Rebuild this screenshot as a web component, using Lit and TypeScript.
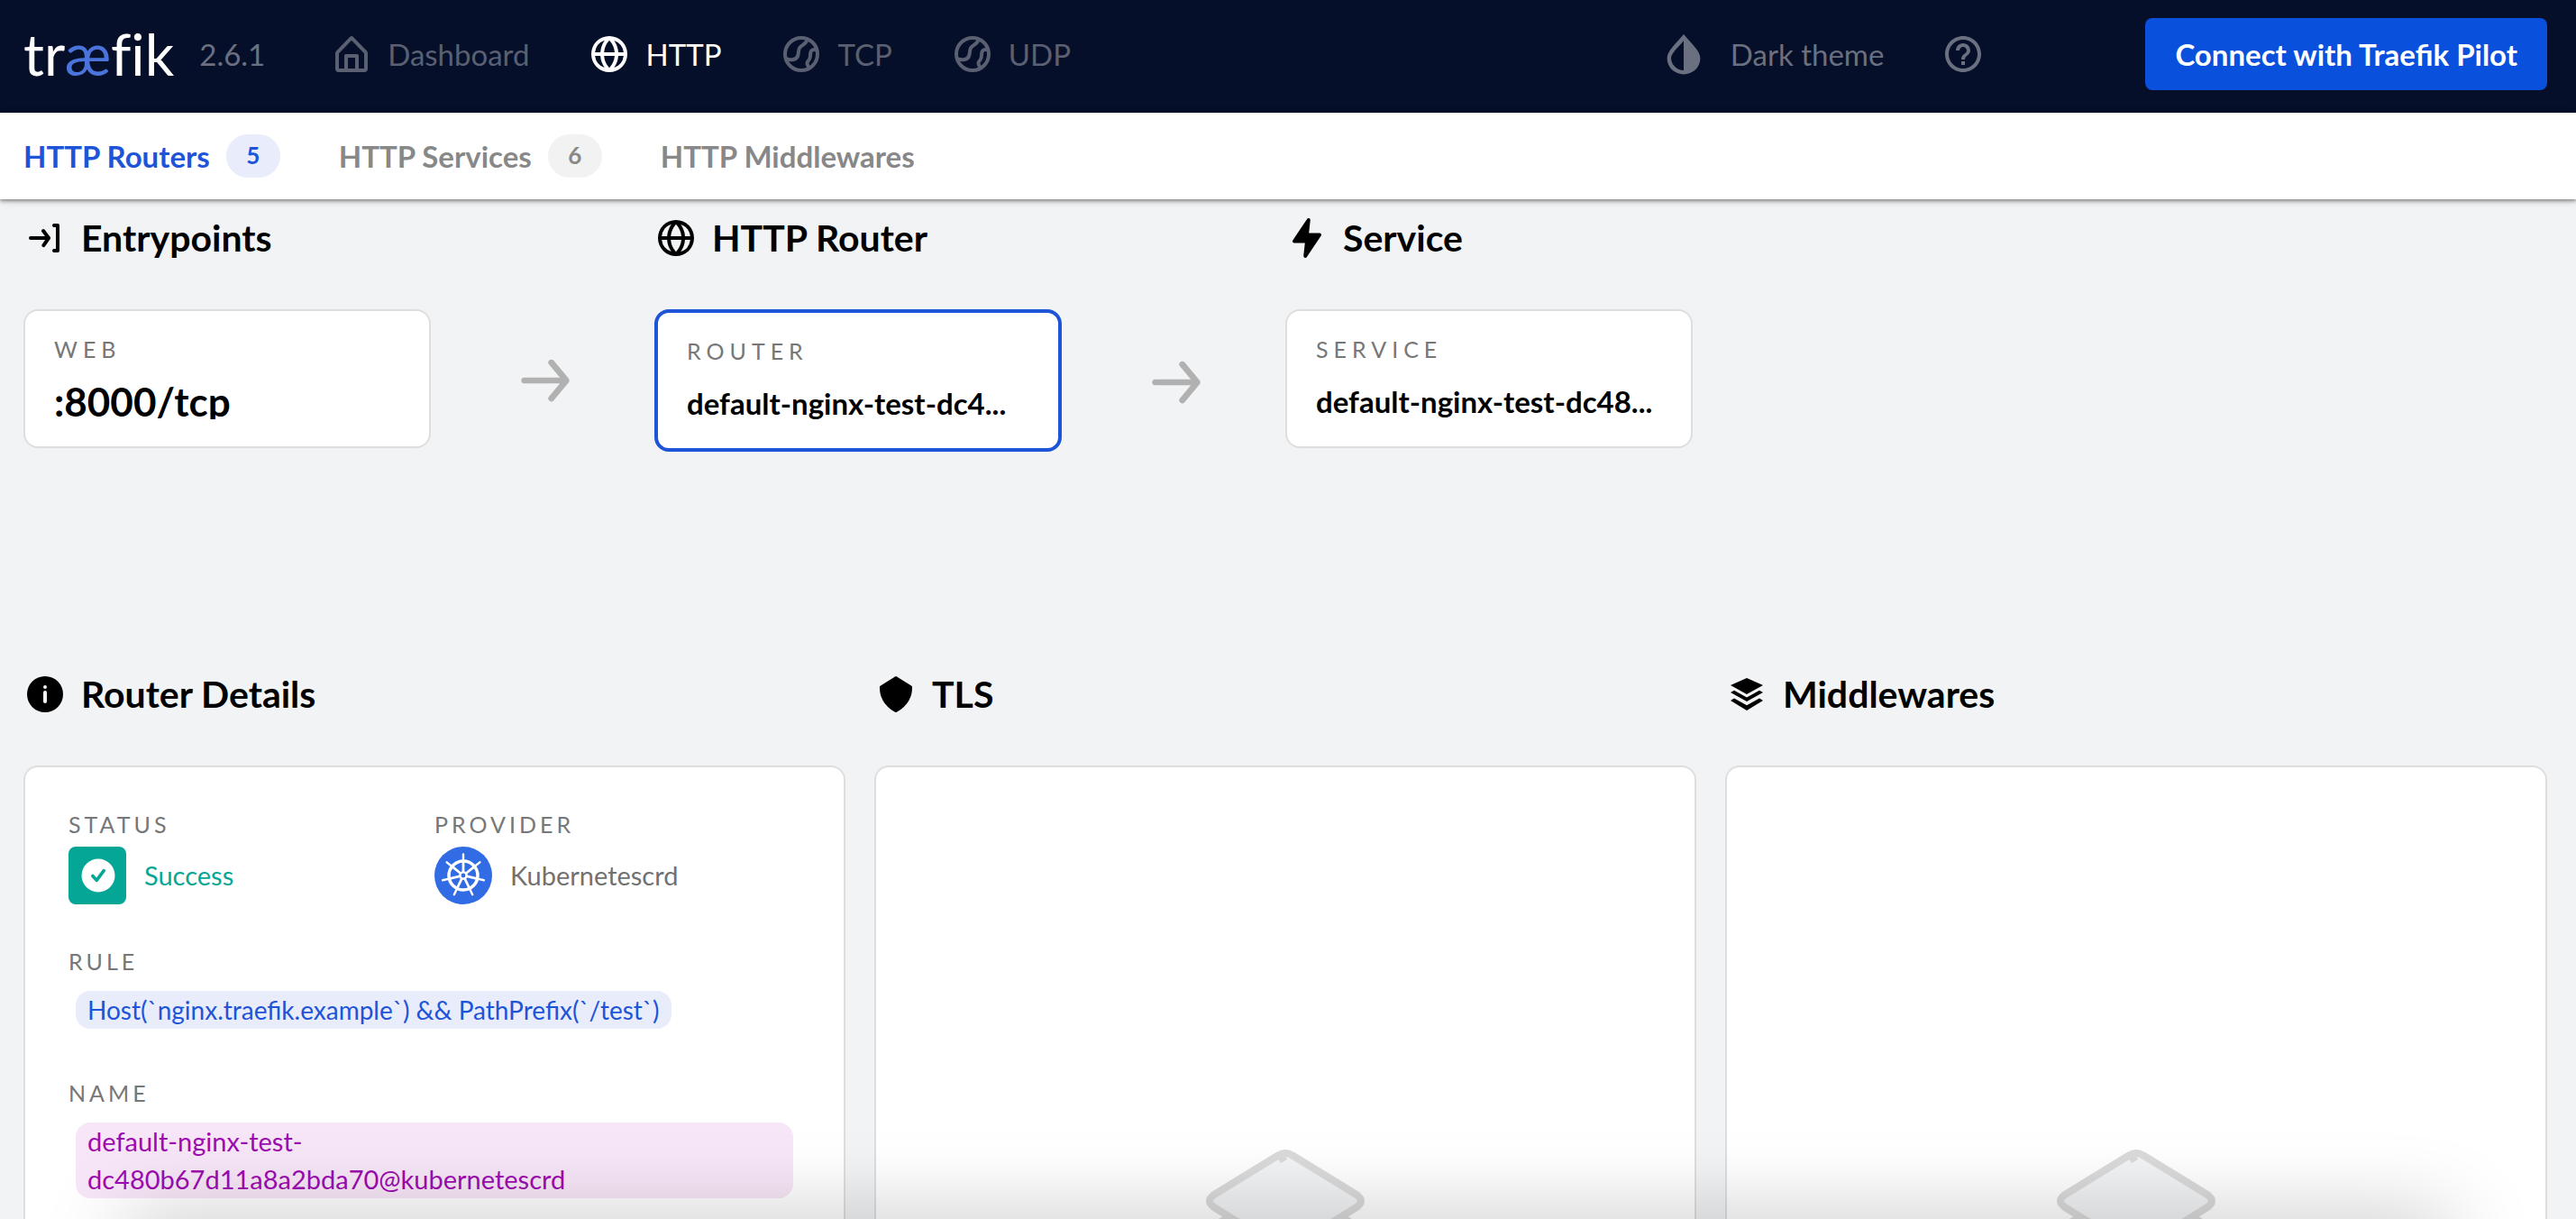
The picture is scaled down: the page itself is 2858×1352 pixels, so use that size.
import { LitElement, html, css, svg } from "lit";
import { customElement } from "lit/decorators.js";

const ICONS: Record<string, unknown> = {
  home: svg`<path d="M20.42 10.18 12.71 2.3a1 1 0 0 0-1.42 0l-7.71 7.89A2 2 0 0 0 3 11.62V20a2 2 0 0 0 1.89 2h14.22A2 2 0 0 0 21 20v-8.38a2.07 2.07 0 0 0-.58-1.44zM10 20v-6h4v6zm9 0h-3v-7a1 1 0 0 0-1-1H9a1 1 0 0 0-1 1v7H5v-8.42l7-7.15 7 7.19z"/>`,
  globe: svg`<path d="M22 12A10 10 0 0 0 12 2a10 10 0 0 0 0 20 10 10 0 0 0 10-10zm-2.07-1H17a12.91 12.91 0 0 0-2.33-6.54A8 8 0 0 1 19.93 11zM9.08 13H15a11.44 11.44 0 0 1-3 6.61A11 11 0 0 1 9.08 13zm0-2A11.4 11.4 0 0 1 12 4.4a11.19 11.19 0 0 1 3 6.6zm.36-6.57A13.18 13.18 0 0 0 7.07 11h-3a8 8 0 0 1 5.37-6.57zM4.07 13h3a12.86 12.86 0 0 0 2.35 6.56A8 8 0 0 1 4.07 13zm10.55 6.55A13.14 13.14 0 0 0 17 13h2.95a8 8 0 0 1-5.33 6.55z"/>`,
  planet: svg`<g fill="none" stroke="currentColor" stroke-width="2"><circle cx="12" cy="12" r="9"/><path d="M3.600 14.600C6 15.600 9.600 15.400 10.200 12.500 10.600 10.800 10.300 9 11.500 8 13 6.800 14.500 6.300 15.400 4"/><path d="M21 9.800C19.500 9.300 17.600 9.300 17.200 11 16.800 12.600 17.300 14.200 16.200 15.300 14.800 16.700 15 17.600 16.300 19.600"/></g>`,
  drop: svg`<path fill-rule="evenodd" d="M12 1C8.500 5.500 2.800 10 2.800 14.300A9 8.700 0 0 0 21.200 14.300C21.200 10 15.500 5.500 12 1ZM12 4.600V21A7 7 0 0 1 5 14.300C5 11.500 9 8.200 12 4.600Z"/>`,
  help: svg`<path d="M11 18h2v-2h-2v2zm1-16C6.480 2 2 6.480 2 12s4.480 10 10 10 10-4.480 10-10S17.520 2 12 2zm0 18c-4.410 0-8-3.590-8-8s3.590-8 8-8 8 3.590 8 8-3.590 8-8 8zm0-14c-2.210 0-4 1.790-4 4h2c0-1.100.9-2 2-2s2 .9 2 2c0 2-3 1.750-3 5h2c0-2.250 3-2.500 3-5 0-2.210-1.790-4-4-4z"/>`,
  login: svg`<path d="M19 4h-2a1 1 0 0 0 0 2h1v12h-1a1 1 0 0 0 0 2h2a1 1 0 0 0 1-1V5a1 1 0 0 0-1-1zM11.800 7.400a1 1 0 0 0-1.600 1.200L12 11H4a1 1 0 0 0 0 2h8.090l-1.720 2.440a1 1 0 0 0 .24 1.400 1 1 0 0 0 1.390-.25l2.820-4a1 1 0 0 0 0-1.180z"/>`,
  flash: svg`<path d="M11.110 23a1 1 0 0 1-.34-.06 1 1 0 0 1-.65-1.050l.77-7.090H5a1 1 0 0 1-.83-1.560l7.890-11.800a1 1 0 0 1 1.170-.38 1 1 0 0 1 .65 1l-.77 7.140H19a1 1 0 0 1 .83 1.560l-7.890 11.800a1 1 0 0 1-.83.440z"/>`,
  info: svg`<path d="M12 2a10 10 0 1 0 10 10A10 10 0 0 0 12 2zm1 14a1 1 0 0 1-2 0v-5a1 1 0 0 1 2 0zm-1-7a1 1 0 1 1 1-1 1 1 0 0 1-1 1z"/>`,
  shield: svg`<path d="M12 22c-.2 0-.35 0-.5-.12C10 21 3 17 3 8.500a1 1 0 0 1 .5-1.200l8-5.100a1 1 0 0 1 1 0l8 5.100a1 1 0 0 1 .5 1.200C21 17 14 21 12.500 21.880A1 1 0 0 1 12 22z"/>`,
  layers: svg`<path d="M12 3 21 7 12 12 3 7zM5 9.900l7 3.800 7-3.800 2 1.100-9 5-9-5zM5 14.300l7 3.800 7-3.800 2 1.200L12 21l-9-5.500z"/>`,
  arrow: svg`<path d="M5 13h11.860l-3.630 4.360a1 1 0 0 0 1.540 1.280l5-6a1.190 1.190 0 0 0 .09-.15c0-.05.05-.08.07-.13A1 1 0 0 0 20 12a1 1 0 0 0-.07-.36c0-.05-.05-.08-.07-.13a1.190 1.190 0 0 0-.09-.15l-5-6A1 1 0 0 0 14 5a1 1 0 0 0-.64.23 1 1 0 0 0-.13 1.410L16.860 11H5a1 1 0 0 0 0 2z"/>`,
};

const icon = (name: string) =>
  html`<svg class="icon icon-${name}" viewBox="0 0 24 24" fill="currentColor" aria-hidden="true">${ICONS[name]}</svg>`;

const NAV = [
  { icon: "home", label: "Dashboard", active: false },
  { icon: "globe", label: "HTTP", active: true },
  { icon: "planet", label: "TCP", active: false },
  { icon: "planet", label: "UDP", active: false },
];

const TABS = [
  { label: "HTTP Routers", count: 5, active: true },
  { label: "HTTP Services", count: 6, active: false },
  { label: "HTTP Middlewares", count: null, active: false },
];

const NAME_PREFIX = "default-nginx-test-";
const NAME_HASH = "dc480b67d11a8a2bda70@kubernetescrd";
const NAME = NAME_PREFIX + NAME_HASH;

const shorten = (text: string, length: number) => `${text.slice(0, length)}...`;

const STEPS = [
  { icon: "login", title: "Entrypoints", label: "web", value: ":8000/tcp", kind: "port" },
  { icon: "globe", title: "HTTP Router", label: "router", value: shorten(NAME, 22), kind: "current" },
  { icon: "flash", title: "Service", label: "service", value: shorten(NAME, 23), kind: "" },
];

const SPOKES = [0, 1, 2, 3, 4, 5, 6];

@customElement("app-root")
export class AppRoot extends LitElement {
  static styles = css`
    :host {
      display: block;
      height: 100vh;
      overflow: hidden;
      position: relative;
      background: #f1f3f5;
      color: #000;
      font-family: Lato, "Noto Sans", sans-serif;
      font-size: 33px;
      line-height: 42px;
    }
    * { box-sizing: border-box; }
    a { color: inherit; text-decoration: none; }
    button { font: inherit; border: 0; background: none; padding: 0; color: inherit; }
    h2 { margin: 0; font: inherit; }
    .icon { width: 48px; height: 48px; flex: none; display: block; }

    .topbar {
      display: flex;
      align-items: center;
      height: 125px;
      padding: 0 32px 5px 26px;
      background: #060f2a;
      color: #6b7080;
    }
    .logo {
      color: #fff;
      font-size: 64px;
      line-height: 64px;
      font-variant-ligatures: none;
      margin-right: 28px;
    }
    .logo em { color: #4a74dc; font-style: normal; }
    .version { margin-right: 72px; }
    .nav { display: flex; gap: 65px; flex: 1; }
    .nav a, .theme { display: flex; align-items: center; gap: 16px; color: #5a6071; }
    .nav a.active { color: #fff; }
    .theme { gap: 28px; color: #6b7080; }
    .help { margin: 0 178px 0 64px; color: #6b7080; }
    .pilot {
      height: 80px;
      padding: 0 33px;
      border-radius: 8px;
      background: #0950dc;
      color: #fff;
      font-weight: 700;
    }

    .tabs {
      position: relative;
      display: flex;
      gap: 65px;
      height: 96px;
      padding: 0 26px;
      align-items: center;
      background: #fff;
      color: #888;
      font-weight: 700;
      box-shadow: 0 2px 4px rgba(0, 0, 0, 0.4), 0 2px 10px rgba(0, 0, 0, 0.12);
    }
    .tab { display: flex; align-items: center; gap: 18px; line-height: 40px; }
    .tab.active { color: #1d54d8; }
    .count {
      min-width: 60px;
      height: 48px;
      border-radius: 24px;
      background: #f2f2f2;
      text-align: center;
      font-size: 26px;
      line-height: 46px;
    }
    .active .count { background: #e8ecfb; }

    main { padding: 19px 32px 0 26px; }
    .heading {
      display: flex;
      align-items: center;
      gap: 16px;
      height: 48px;
      font-size: 41px;
      font-weight: 700;
    }
    .flow { display: grid; grid-template-columns: repeat(4, 1fr); height: 506px; align-items: start; }
    .step { display: grid; grid-template-columns: 20fr 11fr; row-gap: 55px; align-items: center; }
    .step .heading { grid-column: 1 / -1; }
    .step-card {
      min-width: 0;
      border: 2px solid #dedede;
      border-radius: 16px;
      background: #fff;
      padding: 25px 32px 30px;
      align-self: start;
    }
    .step-card.current { border: 4px solid #1d54d8; }
    .label {
      display: block;
      color: #777;
      font-size: 25px;
      line-height: 34px;
      letter-spacing: 4px;
      text-transform: uppercase;
    }
    .step-card .label { letter-spacing: 6px; }
    .value {
      margin-top: 21px;
      white-space: nowrap;
      font-weight: 700;
      line-height: 40px;
    }
    .port .value { font-size: 44px; overflow: hidden; }
    .icon-arrow { width: 80px; height: 80px; justify-self: center; color: #b1b1b1; margin: 4px 0 0 6px; }

    .panels { display: grid; grid-template-columns: repeat(3, 1fr); gap: 32px; }
    .panel { display: grid; row-gap: 55px; }
    .card {
      height: 1040px;
      border: 2px solid #dedede;
      border-radius: 16px;
      background: #fff;
      padding: 46px 48px;
    }
    .empty { display: grid; place-items: center; }
    .stack { width: 176px; }
    .pair { display: grid; grid-template-columns: 1fr 1fr; }
    .entry { display: flex; align-items: center; gap: 20px; font-size: 29px; color: #717171; margin-top: 8px; }
    .entry svg { width: 64px; height: 64px; }
    .ok { color: #06a697; }
    .field { margin-top: 46px; }
    .field + .field { margin-top: 54px; }
    .chip {
      display: inline-block;
      margin: 16px 8px 0;
      padding: 0 13px;
      border-radius: 16px;
      background: #e8ecfb;
      color: #1d54d8;
      font-size: 28px;
    }
    .chip.name { display: block; background: #f7e6f7; color: #9c0cb0; font-size: 29px; }
    .dock-shadow {
      position: absolute;
      left: 140px;
      right: 140px;
      top: 100%;
      height: 60px;
      box-shadow: 0 0 90px rgba(0, 0, 0, 0.25);
      pointer-events: none;
    }
  `;

  private stack() {
    return html`<svg class="stack" viewBox="0 0 176 188" fill="#f1f3f5" stroke="#dadada" stroke-width="8" stroke-linejoin="round" aria-hidden="true">
      <path d="M10 136 80 180Q88 184 96 180L166 136Q176 128 166 120L96 78H80L10 120Q0 128 10 136Z" />
      <path d="M10 100 80 144Q88 148 96 144L166 100Q176 92 166 84L96 42H80L10 84Q0 92 10 100Z" />
      <path d="M9 50 80 6.500Q88 1.500 96 6.500L167 50Q177 57 167 64L96 108Q88 112 80 108L9 64Q-1 57 9 50Z" />
      <path d="M79 9 83 15 90 11 88 6Z" fill="#dadada" stroke="none" />
    </svg>`;
  }

  render() {
    return html`
      <header class="topbar">
        <a class="logo" href="#">tr<em>æ</em>fik</a>
        <span class="version">2.6.1</span>
        <nav class="nav">
          ${NAV.map((n) => html`<a href="#" class=${n.active ? "active" : ""}>${icon(n.icon)}<span>${n.label}</span></a>`)}
        </nav>
        <button class="theme">${icon("drop")}<span>Dark theme</span></button>
        <button class="help" aria-label="Help">${icon("help")}</button>
        <button class="pilot">Connect with Traefik Pilot</button>
      </header>
      <nav class="tabs">
        ${TABS.map((t) => html`<a href="#" class="tab ${t.active ? "active" : ""}">${t.label}${t.count === null ? "" : html`<span class="count">${t.count}</span>`}</a>`)}
      </nav>
      <main>
        <section class="flow">
          ${STEPS.map((s, i) => html`
            <div class="step">
              <h2 class="heading">${icon(s.icon)}${s.title}</h2>
              <div class="step-card ${s.kind}">
                <span class="label">${s.label}</span>
                <div class="value">${s.value}</div>
              </div>
              ${i < STEPS.length - 1 ? icon("arrow") : ""}
            </div>`)}
        </section>
        <section class="panels">
          <div class="panel">
            <h2 class="heading">${icon("info")}Router Details</h2>
            <div class="card">
              <div class="pair">
                <div>
                  <span class="label">Status</span>
                  <div class="entry ok">
                    <svg viewBox="0 0 64 64" aria-hidden="true">
                      <rect width="64" height="64" rx="8" fill="#06a697" />
                      <circle cx="33" cy="32" r="18.500" fill="#fff" />
                      <path d="M26.800 32.500 31.200 37.300 39.200 26.700" fill="none" stroke="#06a697" stroke-width="3.600" stroke-linecap="round" stroke-linejoin="round" />
                    </svg>
                    Success
                  </div>
                </div>
                <div>
                  <span class="label">Provider</span>
                  <div class="entry">
                    <svg viewBox="0 0 64 64" fill="none" stroke="#fff" stroke-linecap="round" aria-hidden="true">
                      <circle cx="32" cy="32" r="32" fill="#326ce5" stroke="none" />
                      <circle cx="32" cy="32" r="16" stroke-width="3.500" />
                      ${SPOKES.map((n) => svg`<g transform="rotate(${(n * 360) / 7} 32 32)"><path d="M32 30V17" stroke-width="2.800" /><path d="M32 16V8.500" stroke-width="2.400" /></g>`)}
                      <circle cx="32" cy="32" r="4.800" fill="#fff" stroke="none" />
                      <circle cx="32" cy="32" r="2.400" fill="#326ce5" stroke="none" />
                    </svg>
                    Kubernetescrd
                  </div>
                </div>
              </div>
              <div class="field">
                <span class="label">Rule</span>
                <span class="chip">Host(\`nginx.traefik.example\`) &amp;&amp; PathPrefix(\`/test\`)</span>
              </div>
              <div class="field">
                <span class="label">Name</span>
                <span class="chip name">${NAME_PREFIX}<br />${NAME_HASH}</span>
              </div>
            </div>
          </div>
          <div class="panel">
            <h2 class="heading">${icon("shield")}TLS</h2>
            <div class="card empty">${this.stack()}</div>
          </div>
          <div class="panel">
            <h2 class="heading">${icon("layers")}Middlewares</h2>
            <div class="card empty">${this.stack()}</div>
          </div>
        </section>
      </main>
      <div class="dock-shadow"></div>
    `;
  }
}
